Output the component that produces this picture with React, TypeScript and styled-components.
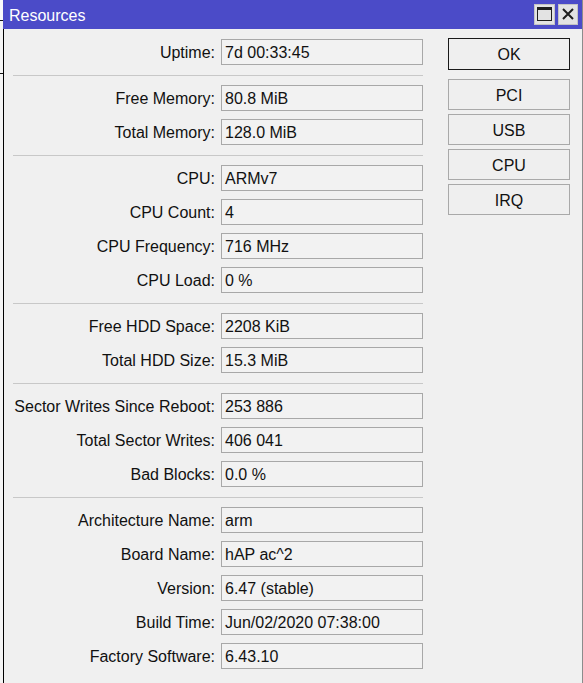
import React from "react";
import styled, { createGlobalStyle } from "styled-components";

const GlobalStyle = createGlobalStyle`
  html, body { margin: 0; padding: 0; background: #f0f0f0; }
  body { font-family: "Liberation Sans", Arial, sans-serif; }
`;

const Screen = styled.div`
  display: flex;
  width: 583px;
  height: 683px;
  overflow: hidden;
`;

const Backdrop = styled.div`
  width: 3px;
  flex: none;
  background:
    linear-gradient(#111, #111) 0 20px / 3px 1px no-repeat,
    linear-gradient(#111, #111) 0 73px / 3px 1px no-repeat,
    linear-gradient(#fbfbfb, #fbfbfb) 0 0 / 3px 20px no-repeat,
    #f4f4f4;
`;

const Window = styled.div`
  flex: 1;
  display: flex;
  flex-direction: column;
  border-right: 1px solid #8c8c8c;
  min-width: 0;
`;

const TitleBar = styled.div`
  height: 29px;
  flex: none;
  display: flex;
  align-items: center;
  padding-left: 6px;
  background: #4b4bc8;
  color: #ffffff;
  font-size: 16px;
`;

const TitleText = styled.span`
  padding-top: 3px;
`;

const TitleButtons = styled.div`
  margin-left: auto;
  display: flex;
  gap: 3px;
  padding-right: 4px;
  padding-bottom: 1px;
`;

const TitleButton = styled.div<{ $w: number }>`
  width: ${(p) => p.$w}px;
  height: 21px;
  box-sizing: border-box;
  background: #e3e3e3;
  border: 1px solid #c4c4c4;
  display: flex;
  align-items: center;
  justify-content: center;
`;

const Body = styled.div`
  flex: 1;
  display: flex;
  align-items: flex-start;
  border-left: 1px solid #000;
  padding-top: 9px;
  background: #f0f0f0;
`;

const Form = styled.div`
  display: flex;
  flex-direction: column;
  width: 410px;
  margin-left: 9px;
  margin-top: 1px;
`;

const Group = styled.div`
  display: flex;
  flex-direction: column;
  gap: 8px;
`;

const Separator = styled.div`
  height: 1px;
  background: #c8c8c8;
  margin: 10px 0 9px 0;
`;

const Row = styled.div`
  display: grid;
  grid-template-columns: 202px 202px;
  column-gap: 6px;
  align-items: center;
`;

const Label = styled.div`
  text-align: right;
  font-size: 16px;
  padding-top: 2px;
  color: #111;
  white-space: nowrap;
`;

const Field = styled.div`
  height: 26px;
  box-sizing: border-box;
  border: 1px solid #a8a8a8;
  background: #f2f2f2;
  padding-left: 3px;
  font-size: 16px;
  line-height: 26px;
  color: #111;
  white-space: nowrap;
  overflow: hidden;
`;

const Buttons = styled.div`
  display: flex;
  flex-direction: column;
  width: 122px;
  margin-left: 25px;
  gap: 4px;
`;

const Button = styled.div<{ $default?: boolean }>`
  height: ${(p) => (p.$default ? 32 : 31)}px;
  margin-bottom: ${(p) => (p.$default ? 5 : 0)}px;
  box-sizing: border-box;
  border: 1px solid ${(p) => (p.$default ? "#1a1a1a" : "#a9a9a9")};
  background: #efefef;
  display: flex;
  align-items: center;
  justify-content: center;
  padding-top: 2px;
  font-size: 16px;
  color: #111;
`;

type Item = [string, string];

const groups: Item[][] = [
  [["Uptime:", "7d 00:33:45"]],
  [
    ["Free Memory:", "80.8 MiB"],
    ["Total Memory:", "128.0 MiB"],
  ],
  [
    ["CPU:", "ARMv7"],
    ["CPU Count:", "4"],
    ["CPU Frequency:", "716 MHz"],
    ["CPU Load:", "0 %"],
  ],
  [
    ["Free HDD Space:", "2208 KiB"],
    ["Total HDD Size:", "15.3 MiB"],
  ],
  [
    ["Sector Writes Since Reboot:", "253 886"],
    ["Total Sector Writes:", "406 041"],
    ["Bad Blocks:", "0.0 %"],
  ],
  [
    ["Architecture Name:", "arm"],
    ["Board Name:", "hAP ac^2"],
    ["Version:", "6.47 (stable)"],
    ["Build Time:", "Jun/02/2020 07:38:00"],
    ["Factory Software:", "6.43.10"],
  ],
];

export default function App() {
  return (
    <>
      <GlobalStyle />
      <Screen>
        <Backdrop />
        <Window>
          <TitleBar>
            <TitleText>Resources</TitleText>
            <TitleButtons>
              <TitleButton $w={21}>
                <svg width="15" height="14" viewBox="0 0 15 14">
                  <rect x="0.5" y="0.5" width="14" height="13" fill="none" stroke="#1e1e1e" strokeWidth="1" />
                  <rect x="0" y="0" width="15" height="3" fill="#1e1e1e" />
                </svg>
              </TitleButton>
              <TitleButton $w={20}>
                <svg width="12" height="12" viewBox="0 0 12 12">
                  <path d="M1 1 L11 11 M11 1 L1 11" stroke="#1e1e1e" strokeWidth="2" />
                </svg>
              </TitleButton>
            </TitleButtons>
          </TitleBar>
          <Body>
            <Form>
              {groups.map((g, gi) => (
                <React.Fragment key={gi}>
                  {gi > 0 && <Separator />}
                  <Group>
                    {g.map(([l, v]) => (
                      <Row key={l}>
                        <Label>{l}</Label>
                        <Field>{v}</Field>
                      </Row>
                    ))}
                  </Group>
                </React.Fragment>
              ))}
            </Form>
            <Buttons>
              <Button $default>OK</Button>
              <Button>PCI</Button>
              <Button>USB</Button>
              <Button>CPU</Button>
              <Button>IRQ</Button>
            </Buttons>
          </Body>
        </Window>
      </Screen>
    </>
  );
}
